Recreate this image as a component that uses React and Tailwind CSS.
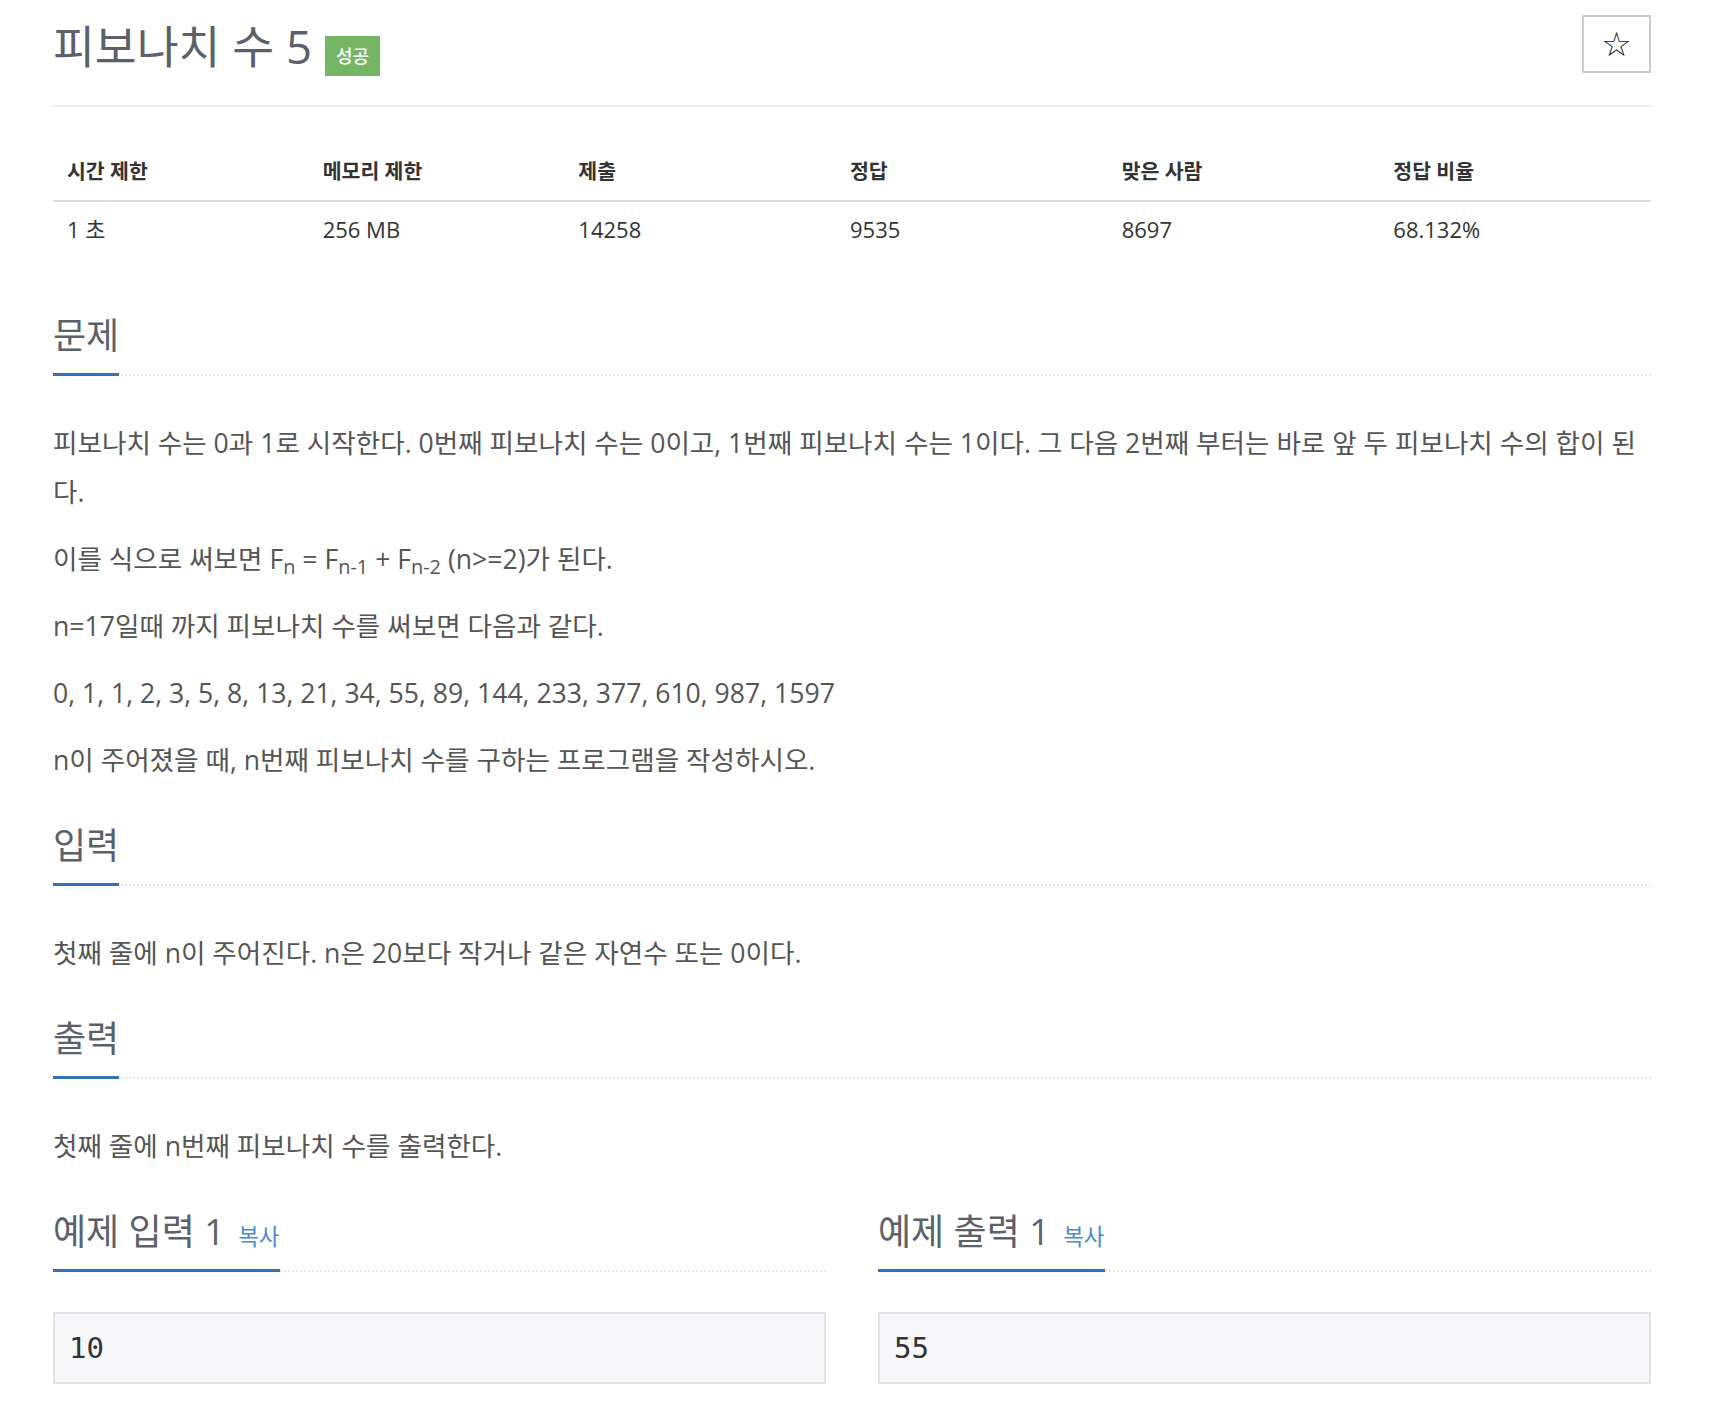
import React from "react";

function Headline({ children }) {
  return (
    <div className="flex border-b-2 border-dotted border-[#e3e3e8]">
      <h2 className="mb-[-2px] border-b-[3px] border-[#3272b8] pb-[14px] text-[36px] font-normal leading-[46px] text-[#5b616b]">
        {children}
      </h2>
    </div>
  );
}

function P({ children }) {
  return <p className="mb-[18px] text-[26.6px] leading-[49px] text-[#555]">{children}</p>;
}

export default function App() {
  const cols = [
    ["시간 제한", "1 초", "w-[16%]"],
    ["메모리 제한", "256 MB", "w-[16%]"],
    ["제출", "14258", "w-[17%]"],
    ["정답", "9535", "w-[17%]"],
    ["맞은 사람", "8697", "w-[17%]"],
    ["정답 비율", "68.132%", "w-[17%]"],
  ];
  return (
    <div className="min-h-[1412px] bg-white pl-[53px] pr-[69px] font-['Open_Sans','Noto_Sans_CJK_KR',sans-serif] [font-feature-settings:'palt']">
      {/* header */}
      <div className="flex items-start justify-between border-b-2 border-[#eee] pt-[15px] pb-[29px]">
        <div className="mt-[3px] flex items-start gap-[13px]">
          <h1 className="text-[45.5px] font-normal leading-[56px] text-[#5b616b]">피보나치 수 5</h1>
          <span className="mt-[18px] flex h-[40px] w-[55px] items-center justify-center bg-[#75b666] text-[18px] font-medium text-white">
            성공
          </span>
        </div>
        <button className="flex h-[58px] w-[69px] items-center justify-center border-2 border-[#ccc] bg-white font-['DejaVu_Sans',sans-serif] text-[34px] leading-none text-[#222]">
          ☆
        </button>
      </div>

      {/* table */}
      <table className="mt-[35px] w-full table-fixed border-collapse text-[22px] text-[#333]">
        <thead>
          <tr className="border-b-2 border-[#ddd]">
            {cols.map((c) => (
              <th key={c[0]} className={`${c[2]} px-[14px] py-[14px] text-left text-[20.5px] font-bold leading-[30px]`}>
                {c[0]}
              </th>
            ))}
          </tr>
        </thead>
        <tbody>
          <tr>
            {cols.map((c) => (
              <td key={c[0]} className="px-[14px] py-[12px] text-left leading-[30px]">
                {c[1]}
              </td>
            ))}
          </tr>
        </tbody>
      </table>

      {/* 문제 */}
      <div className="mt-[57px]">
        <div className="mb-[43px]">
          <Headline>문제</Headline>
        </div>
        <P>
          피보나치 수는 0과 1로 시작한다. 0번째 피보나치 수는 0이고, 1번째 피보나치 수는 1이다. 그 다음 2번째 부터는 바로 앞 두 피보나치 수의 합이 된다.
        </P>
        <P>
          이를 식으로 써보면 F<sub>n</sub> = F<sub>n-1</sub> + F<sub>n-2</sub> (n&gt;=2)가 된다.
        </P>
        <P>n=17일때 까지 피보나치 수를 써보면 다음과 같다.</P>
        <P>0, 1, 1, 2, 3, 5, 8, 13, 21, 34, 55, 89, 144, 233, 377, 610, 987, 1597</P>
        <P>n이 주어졌을 때, n번째 피보나치 수를 구하는 프로그램을 작성하시오.</P>
      </div>

      {/* 입력 */}
      <div className="mt-[38px]">
        <div className="mb-[43px]">
          <Headline>입력</Headline>
        </div>
        <P>첫째 줄에 n이 주어진다. n은 20보다 작거나 같은 자연수 또는 0이다.</P>
      </div>

      {/* 출력 */}
      <div className="mt-[38px]">
        <div className="mb-[43px]">
          <Headline>출력</Headline>
        </div>
        <P>첫째 줄에 n번째 피보나치 수를 출력한다.</P>
      </div>

      {/* 예제 */}
      <div className="mt-[38px] grid grid-cols-2 gap-[52px]">
        {[
          ["예제 입력 1", "10"],
          ["예제 출력 1", "55"],
        ].map(([t, v]) => (
          <div key={t}>
            <div className="mb-[40px]">
              <Headline>
                {t} <span className="ml-[4px] text-[22.5px] leading-none text-[#4a8bcb]">복사</span>
              </Headline>
            </div>
            <pre className="border-2 border-[#e1e1e8] bg-[#f7f7f9] px-[14px] py-[14px] font-['DejaVu_Sans_Mono',monospace] text-[29px] leading-[40px] text-[#333]">
              {v}
            </pre>
          </div>
        ))}
      </div>
    </div>
  );
}
